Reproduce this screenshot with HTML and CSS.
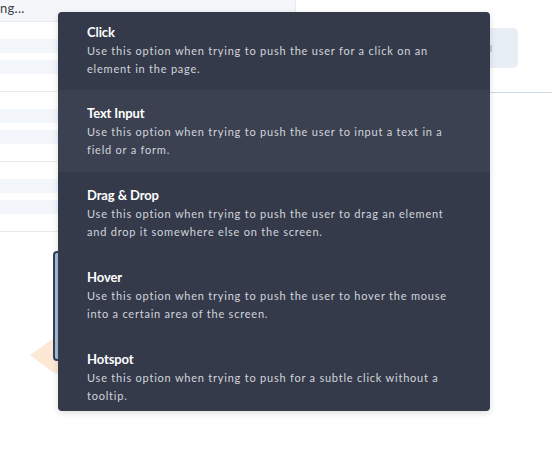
FILE: index.html
```html
<!DOCTYPE html>
<html>
<head>
<meta charset="utf-8">
<link rel="stylesheet" href="styles.css">
</head>
<body>
<div class="app">
  <aside class="list">
    <div class="list-head"><span class="loading">ng...</span></div>
    <div class="group"><div class="bar"></div><div class="bar second"></div></div>
    <div class="group"><div class="bar"></div><div class="bar second"></div></div>
    <div class="group"><div class="bar"></div><div class="bar second"></div></div>
    <div class="canvas">
      <svg class="arrow" width="40" height="40" viewBox="0 0 40 40"><polygon points="0,17 24,0 40,0 40,35 24,35" fill="#fce8d4"/></svg>
      <div class="card"></div>
    </div>
  </aside>
  <main class="main">
    <div class="main-head">
      <div class="search"><span class="caret"></span></div>
    </div>
  </main>
</div>

<div class="menu">
  <div class="menu-scroll">
    <div class="opt">
      <div class="opt-title">Click</div>
      <div class="opt-desc">Use this option when trying to push the user for a click on an element in the page.</div>
    </div>
    <div class="opt active">
      <div class="opt-title">Text Input</div>
      <div class="opt-desc">Use this option when trying to push the user to input a text in a field or a form.</div>
    </div>
    <div class="opt">
      <div class="opt-title">Drag &amp; Drop</div>
      <div class="opt-desc">Use this option when trying to push the user to drag an element and drop it somewhere else on the screen.</div>
    </div>
    <div class="opt">
      <div class="opt-title">Hover</div>
      <div class="opt-desc">Use this option when trying to push the user to hover the mouse into a certain area of the screen.</div>
    </div>
    <div class="opt">
      <div class="opt-title">Hotspot</div>
      <div class="opt-desc">Use this option when trying to push for a subtle click without a tooltip.</div>
    </div>
  </div>
</div>
</body>
</html>
```

FILE: styles.css
```css
html, body {
  margin: 0;
  padding: 0;
  background: #ffffff;
}
body {
  width: 552px;
  height: 451px;
  overflow: hidden;
  position: relative;
  font-family: Lato, "Open Sans", sans-serif;
}
.app {
  display: flex;
  height: 451px;
}
.list {
  width: 296px;
  flex: none;
  display: flex;
  flex-direction: column;
}
.list-head {
  height: 21px;
  background: #f4f6f9;
  border-right: 1px solid #e6ebf2;
  border-bottom: 1px solid #e6ebf2;
  font-size: 13px;
  line-height: 16px;
  color: #3a3f4a;
  box-sizing: content-box;
}
.loading {
  display: block;
  letter-spacing: 0.3px;
}
.group {
  height: 70px;
  border-bottom: 1px solid #e6ebf2;
  display: flex;
  flex-direction: column;
  padding-top: 17px;
  box-sizing: border-box;
}
.bar {
  height: 14px;
  background: #f3f6fa;
}
.bar.second {
  margin-top: 7px;
}
.canvas {
  position: relative;
  padding: 19px 0 0 53px;
}
.card {
  width: 200px;
  height: 106px;
  border: 2px solid #34405a;
  border-radius: 4px;
  background: #a5bdd7;
  position: relative;
}
.arrow {
  position: absolute;
  left: 30px;
  top: 106px;
}
.main {
  flex: 1;
}
.main-head {
  height: 93px;
  border-bottom: 1px solid #c9d9e7;
  padding: 28px 34px 0 40px;
  box-sizing: border-box;
}
.search {
  height: 40px;
  background: #e8eef6;
  border-radius: 5px;
  position: relative;
}
.caret {
  position: absolute;
  right: 26px;
  top: 17px;
  width: 3px;
  height: 7px;
  background: #c3cad4;
}
.menu {
  position: absolute;
  left: 58px;
  top: 12px;
  width: 432px;
  height: 399px;
  background: #343a4a;
  border-radius: 4px;
  overflow: hidden;
  box-shadow: 0 2px 6px rgba(20, 25, 40, 0.15);
}
.menu-scroll {
  margin-top: -3px;
}
.opt {
  padding: 14px 29px;
  height: 82px;
  box-sizing: border-box;
}
.opt:first-child {
  height: 81px;
}
.opt.active {
  background: #3b4151;
}
.opt-title {
  font-size: 13px;
  font-weight: 700;
  line-height: 19px;
  color: #ffffff;
  letter-spacing: -0.1px;
}
.opt-desc {
  font-size: 11px;
  line-height: 18px;
  color: #d2d5db;
  letter-spacing: 0.78px;
}
```
